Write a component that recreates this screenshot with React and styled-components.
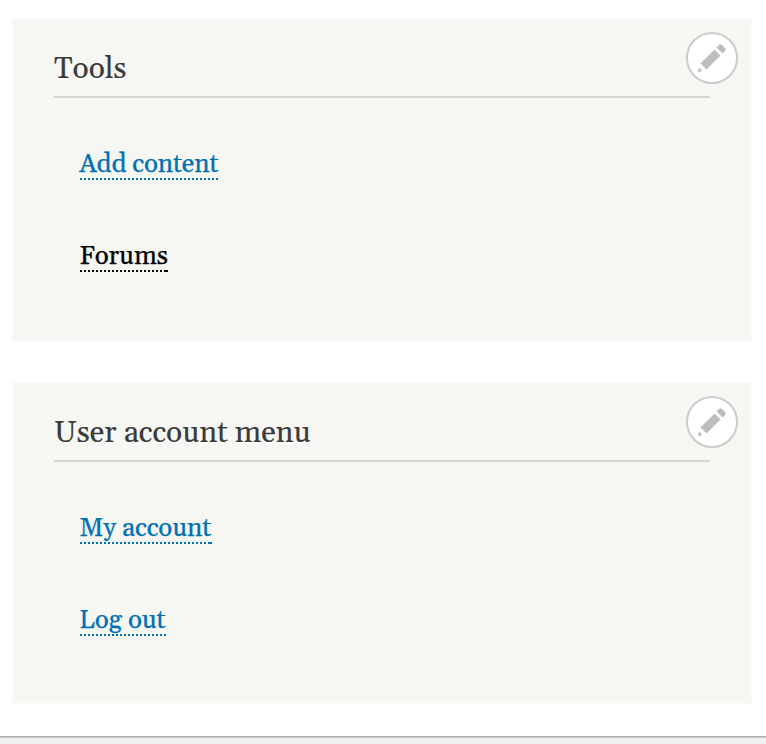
import React from 'react';
import styled, { createGlobalStyle } from 'styled-components';

const GlobalStyle = createGlobalStyle`
  * { box-sizing: border-box; }
  body { margin: 0; background: #fff; overflow: hidden; }
`;

const Page = styled.div`
  display: flex;
  flex-direction: column;
  height: 744px;
  padding-top: 18px;
  font-family: Georgia, Gelasio, "Liberation Serif", serif;
`;

const Block = styled.section`
  position: relative;
  flex: none;
  width: 740px;
  height: ${(p) => p.$height}px;
  margin: 0 0 ${(p) => p.$gap}px 12px;
  padding: 0 40px;
  border: 2px solid #f9f9f9;
  background: #f6f6f2;
`;

const Heading = styled.h2`
  height: 78px;
  margin: 0 0 32px;
  padding-top: 31px;
  border-bottom: 2px solid #d4d5d5;
  color: #3b3b3b;
  font-size: 30px;
  font-weight: 400;
  line-height: 36px;
  text-shadow: 0 2px 0 #fff;
  -webkit-text-stroke: 0.15px currentColor;
  white-space: nowrap;
`;

const Menu = styled.ul`
  display: flex;
  flex-direction: column;
  align-items: flex-start;
  gap: 42px;
  margin: 0;
  padding: 0 0 0 26px;
  list-style: none;
`;

const MenuItem = styled.li`
  height: 50px;
`;

const MenuLink = styled.a`
  display: block;
  width: ${(p) => p.$width}px;
  height: 50px;
  padding-top: 19px;
  color: ${(p) => p.$color};
  background:
    linear-gradient(currentColor, currentColor) right bottom / 2px 2px no-repeat,
    repeating-linear-gradient(90deg, currentColor 0 2px, transparent 2px 4px) left bottom / 100% 2px no-repeat;
  font-size: 26px;
  line-height: 32px;
  letter-spacing: -0.15px;
  text-indent: -0.7px;
  -webkit-text-stroke: 0.25px currentColor;
  text-decoration: none;
  white-space: nowrap;
`;

const EditButton = styled.button`
  position: absolute;
  top: 12px;
  right: 12px;
  display: flex;
  align-items: center;
  justify-content: center;
  width: 52px;
  height: 52px;
  padding: 0;
  border: 2px solid #ccc;
  border-radius: 50%;
  background: #fff;
`;

const Footer = styled.footer`
  flex: none;
  height: 8px;
  border-top: 1px solid #adadad;
  background: #efefef;
  box-shadow: inset 0 1px 0 #cacaca;
`;

const Pencil = () => (
  <svg width="32" height="32" viewBox="0 0 16 16" fill="#bebebe" aria-hidden="true">
    <path d="M14.545 3.042l-1.586-1.585c-.389-.389-1.025-.389-1.414 0l-1.293 1.293 3 3 1.293-1.293c.389-.389.389-1.026 0-1.415z" />
    <rect x="5.129" y="3.8" width="4.243" height="9.899" transform="matrix(-.707 -.707 .707 -.707 6.189 20.064)" />
    <path d="M.908 14.775c-.087.262.055.397.316.312l2.001-.667-1.65-1.646-.667 2.001z" />
  </svg>
);

const blocks = [
  {
    title: 'Tools', height: 324, gap: 40,
    links: [
      { label: 'Add content', width: 138, color: '#0071b3' },
      { label: 'Forums', width: 88, color: '#000' },
    ],
  },
  {
    title: 'User account menu', height: 322, gap: 32,
    links: [
      { label: 'My account', width: 132, color: '#0071b3' },
      { label: 'Log out', width: 86, color: '#0071b3' },
    ],
  },
];

export default function App() {
  return (
    <Page>
      <GlobalStyle />
      {blocks.map((block) => (
        <Block key={block.title} $height={block.height} $gap={block.gap}>
          <Heading>{block.title}</Heading>
          <EditButton aria-label="Edit block"><Pencil /></EditButton>
          <Menu>
            {block.links.map((link) => (
              <MenuItem key={link.label}>
                <MenuLink $width={link.width} $color={link.color}>{link.label}</MenuLink>
              </MenuItem>
            ))}
          </Menu>
        </Block>
      ))}
      <Footer />
    </Page>
  );
}
